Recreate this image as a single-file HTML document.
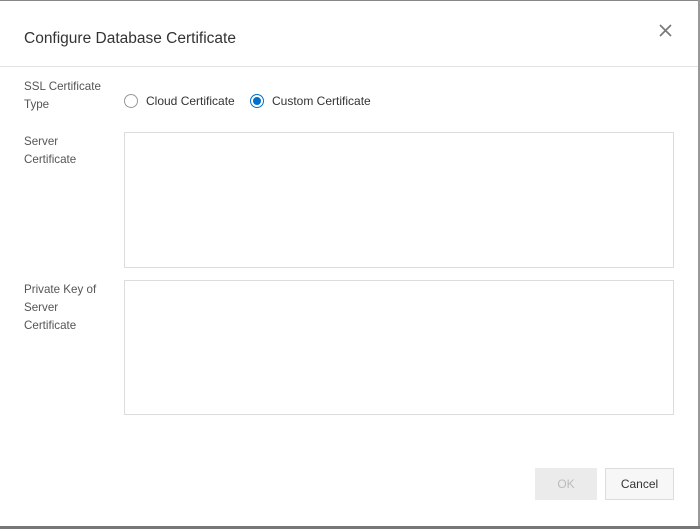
<!DOCTYPE html>
<html><head><meta charset="utf-8"><style>
*{box-sizing:border-box;margin:0;padding:0}
body{width:700px;height:529px;background:#fff;font-family:"Liberation Sans",sans-serif;color:#333;position:relative;overflow:hidden}
.top{position:absolute;left:0;top:0;width:700px;height:1px;background:#888}
.right{position:absolute;right:0;top:0;width:2px;height:529px;background:#999}
.bot{position:absolute;left:0;bottom:0;width:700px;height:3px;background:#777}
.title{position:absolute;left:24px;top:30px;font-size:15.5px;color:#333}
.hr{position:absolute;left:0;top:66px;width:698px;height:1px;background:#e3e3e3}
.lbl{position:absolute;left:24px;font-size:11.6px;line-height:18px;color:#555}
.radio{position:absolute;top:94px;width:14px;height:14px;border-radius:50%;border:1px solid #999;background:#fff}
.radio.on{border-color:#0070cc}
.radio.on::after{content:"";position:absolute;left:2px;top:2px;width:8px;height:8px;border-radius:50%;background:#0070cc}
.rt{position:absolute;top:94px;font-size:12px;color:#333}
.ta{position:absolute;left:124px;width:550px;border:1px solid #dcdcdc}
.btn{position:absolute;top:468px;height:32px;font-size:12px;text-align:center;line-height:33px}
</style></head><body>
<div class="top"></div><div class="right"></div><div class="bot"></div>
<div class="title">Configure Database Certificate</div>
<svg style="position:absolute;left:659px;top:24px" width="13" height="13"><path d="M1 1L12 12M12 1L1 12" stroke="#777" stroke-width="1.6"/></svg>
<div class="hr"></div>
<div class="lbl" style="top:78px">SSL Certificate<br>Type</div>
<div class="radio" style="left:124px"></div><div class="rt" style="left:146px">Cloud Certificate</div>
<div class="radio on" style="left:250px"></div><div class="rt" style="left:272px">Custom Certificate</div>
<div class="lbl" style="top:133px">Server<br>Certificate</div>
<div class="ta" style="top:132px;height:136px"></div>
<div class="lbl" style="top:281px">Private Key of<br>Server<br>Certificate</div>
<div class="ta" style="top:280px;height:135px"></div>
<div class="btn" style="left:535px;width:62px;background:#ebebeb;color:#bbb">OK</div>
<div class="btn" style="left:605px;width:69px;background:#f7f7f7;border:1px solid #dcdcdc;line-height:31px;color:#333">Cancel</div>
</body></html>
